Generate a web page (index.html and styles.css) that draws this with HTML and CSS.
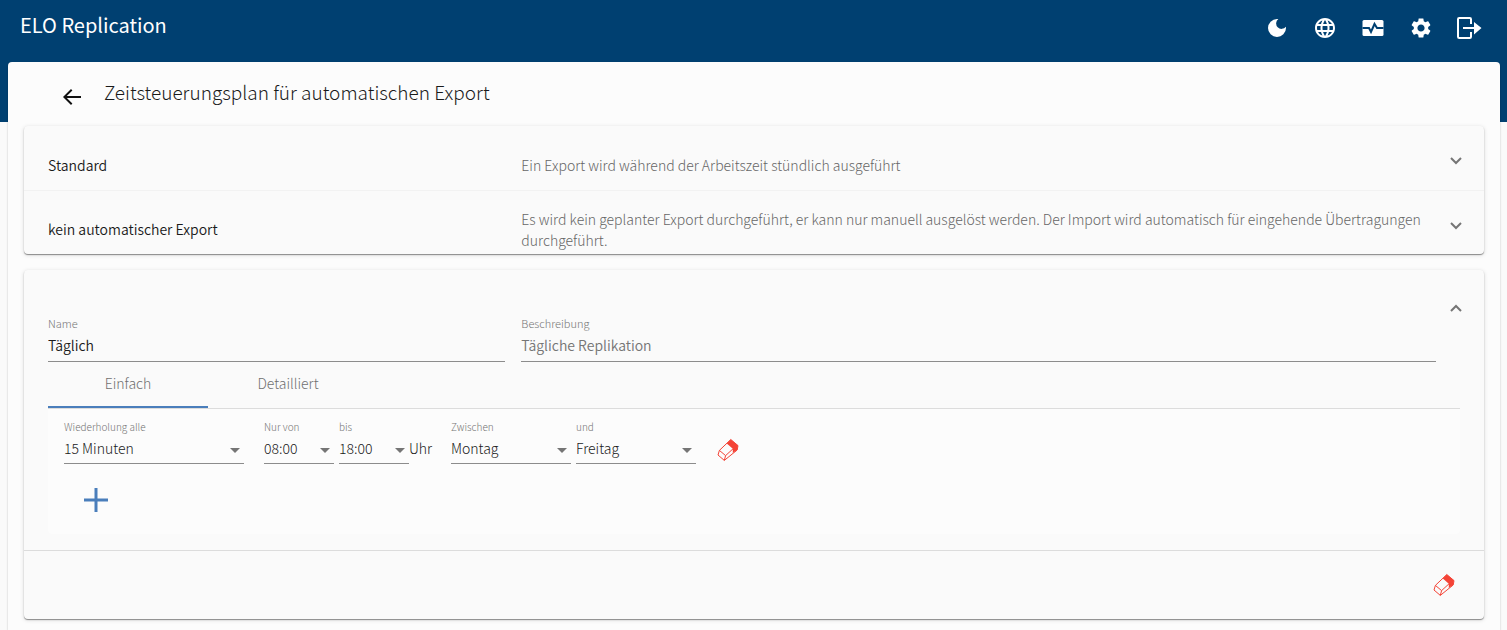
FILE: index.html
```html
<!DOCTYPE html>
<html lang="de">
<head>
<meta charset="utf-8">
<meta name="viewport" content="width=device-width, initial-scale=1">
<title>ELO Replication</title>
<link rel="stylesheet" href="styles.css">
</head>
<body>
<svg class="sprite" aria-hidden="true">
  <symbol id="eraser" viewBox="0 0 24 24">
    <path d="M14.800 1.500 22 7.600 21 12 16.800 15 16.800 10.800 10.800 5.400Z" fill="#f44336"/>
    <path d="M14.800 1.500 22 7.600 21.200 12 8.300 22.400 2 17 3.400 12.400Z M3.400 12.400 9.600 17.600 8.300 22.400 M9.600 17.600 17 10.800" fill="none" stroke="#f44336" stroke-width="1"/>
  </symbol>
</svg>
<header class="topbar">
  <h1 class="brand">ELO Replication</h1>
  <nav class="tools" aria-label="Werkzeuge">
    <button class="icon-button" type="button" aria-label="Dunkles Design"><svg viewBox="0 0 24 24"><path d="M12 3a9 9 0 1 0 9 9c0-.46-.04-.92-.1-1.36A5.4 5.4 0 1 1 13.36 3.1C12.92 3.04 12.46 3 12 3z"/></svg></button>
    <button class="icon-button" type="button" aria-label="Sprache"><svg viewBox="0 0 24 24"><path d="M11.99 2C6.47 2 2 6.48 2 12s4.47 10 9.99 10C17.52 22 22 17.52 22 12S17.52 2 11.99 2zm6.93 6h-2.95c-.32-1.25-.78-2.45-1.38-3.56 1.84.63 3.37 1.91 4.33 3.56zM12 4.04c.83 1.2 1.48 2.53 1.91 3.96h-3.82c.43-1.43 1.08-2.76 1.91-3.96zM4.26 14C4.1 13.36 4 12.69 4 12s.1-1.36.26-2h3.38c-.08.66-.14 1.32-.14 2s.06 1.34.14 2H4.26zm.82 2h2.95c.32 1.25.78 2.45 1.38 3.56-1.84-.63-3.37-1.9-4.33-3.56zm2.95-8H5.08c.96-1.66 2.49-2.93 4.33-3.56C8.81 5.55 8.35 6.75 8.03 8zM12 19.96c-.83-1.2-1.48-2.53-1.91-3.96h3.82c-.43 1.43-1.08 2.76-1.91 3.96zM14.34 14H9.66c-.09-.66-.16-1.32-.16-2s.07-1.35.16-2h4.68c.09.65.16 1.32.16 2s-.07 1.34-.16 2zm.25 5.56c.6-1.11 1.06-2.31 1.38-3.56h2.95c-.96 1.65-2.49 2.93-4.33 3.56zM16.36 14c.08-.66.14-1.32.14-2s-.06-1.34-.14-2h3.38c.16.64.26 1.31.26 2s-.1 1.36-.26 2h-3.38z"/></svg></button>
    <button class="icon-button" type="button" aria-label="Überwachung"><svg viewBox="0 0 24 24"><rect x="1.500" y="4" width="21" height="16" rx="1.500"/><path class="pulse" d="M1.500 12H8l2 4 3.500-8 2.500 4h6.500"/></svg></button>
    <button class="icon-button" type="button" aria-label="Einstellungen"><svg viewBox="0 0 24 24"><path d="M19.14 12.94c.04-.3.06-.61.06-.94 0-.32-.02-.64-.07-.94l2.03-1.58c.18-.14.23-.41.12-.61l-1.92-3.32c-.12-.22-.37-.29-.59-.22l-2.39.96c-.5-.38-1.03-.7-1.62-.94l-.36-2.54c-.04-.24-.24-.41-.48-.41h-3.84c-.24 0-.43.17-.47.41l-.36 2.54c-.59.24-1.13.57-1.62.94l-2.39-.96c-.22-.08-.47 0-.59.22L2.74 8.87c-.12.21-.08.47.12.61l2.03 1.58c-.05.3-.09.63-.09.94s.02.64.07.94l-2.03 1.58c-.18.14-.23.41-.12.61l1.92 3.32c.12.22.37.29.59.22l2.39-.96c.5.38 1.03.7 1.62.94l.36 2.54c.05.24.24.41.48.41h3.84c.24 0 .44-.17.47-.41l.36-2.54c.59-.24 1.13-.56 1.62-.94l2.39.96c.22.08.47 0 .59-.22l1.92-3.32c.12-.22.07-.47-.12-.61l-2.01-1.58zM12 15.6c-1.98 0-3.6-1.62-3.6-3.6s1.62-3.6 3.6-3.6 3.6 1.62 3.6 3.6-1.62 3.6-3.6 3.6z"/></svg></button>
    <button class="icon-button" type="button" aria-label="Abmelden"><svg viewBox="0 0 24 24"><path d="M14 8V3.200Q14 2 12.800 2H2.200Q1 2 1 3.200V20.800Q1 22 2.200 22H12.800Q14 22 14 20.800V16" fill="none" stroke="#fff" stroke-width="2"/><path d="M6 11h11V6l7.500 6-7.500 6.500V13H6z"/></svg></button>
  </nav>
</header>
<main class="sheet">
  <div class="sheet-head">
    <button class="back" type="button" aria-label="Zurück"><svg viewBox="0 0 24 24"><path d="M21 11H6.800l5.600-5.600L11 4 3 12l8 8 1.400-1.400L6.800 13H21z"/></svg></button>
    <h2 class="heading">Zeitsteuerungsplan für automatischen Export</h2>
  </div>

  <section class="panel">
    <button class="row" type="button" aria-expanded="false">
      <span class="columns">
        <span class="plan-name">Standard</span>
        <span class="plan-text">Ein Export wird während der Arbeitszeit stündlich ausgeführt</span>
      </span>
      <svg class="chevron" viewBox="0 0 12 8"><path d="M1 1l5 5 5-5"/></svg>
    </button>
    <button class="row" type="button" aria-expanded="false">
      <span class="columns">
        <span class="plan-name">kein automatischer Export</span>
        <span class="plan-text">Es wird kein geplanter Export durchgeführt, er kann nur manuell ausgelöst werden. Der Import wird automatisch für eingehende Übertragungen durchgeführt.</span>
      </span>
      <svg class="chevron" viewBox="0 0 12 8"><path d="M1 1l5 5 5-5"/></svg>
    </button>
  </section>

  <section class="panel open">
    <div class="edit-head">
      <div class="columns">
        <div class="field wide"><label for="name">Name</label><input id="name" type="text" value="Täglich"></div>
        <div class="field wide muted"><label for="text">Beschreibung</label><input id="text" type="text" value="Tägliche Replikation"></div>
      </div>
      <button class="collapse" type="button" aria-label="Zuklappen" aria-expanded="true"><svg class="chevron" viewBox="0 0 12 8"><path d="M1 7l5-5 5 5"/></svg></button>
    </div>
    <div class="tabs" role="tablist">
      <button class="tab active" type="button" role="tab" aria-selected="true">Einfach</button>
      <button class="tab" type="button" role="tab" aria-selected="false">Detailliert</button>
    </div>
    <div class="schedule">
      <div class="rule">
        <div class="field interval"><label for="interval">Wiederholung alle</label><select id="interval"><option>15 Minuten</option></select></div>
        <div class="group hours">
          <div class="field time"><label for="from">Nur von</label><select id="from"><option>08:00</option></select></div>
          <div class="field time"><label for="to">bis</label><select id="to"><option>18:00</option></select></div>
        </div>
        <span class="unit">Uhr</span>
        <div class="group">
          <div class="field day"><label for="first">Zwischen</label><select id="first"><option>Montag</option></select></div>
          <div class="field day"><label for="last">und</label><select id="last"><option>Freitag</option></select></div>
        </div>
        <button class="erase" type="button" aria-label="Regel löschen"><svg><use href="#eraser"/></svg></button>
      </div>
      <button class="add" type="button" aria-label="Regel hinzufügen"><svg viewBox="0 0 24 24"><path d="M12 0v24M0 12h24"/></svg></button>
    </div>
    <footer class="panel-foot">
      <button class="erase" type="button" aria-label="Plan löschen"><svg><use href="#eraser"/></svg></button>
    </footer>
  </section>
</main>
</body>
</html>
```

FILE: styles.css
```css
* { box-sizing: border-box; }

body {
  margin: 0;
  min-height: 100vh;
  display: flex;
  flex-direction: column;
  background: linear-gradient(#004071 122px, #fafafa 122px);
  color: #1a1a1a;
  font-family: "Noto Sans CJK SC", "Open Sans", sans-serif;
  font-size: 14px;
  font-weight: 300;
  line-height: 21px;
}

button, input, select { font: inherit; color: inherit; }
button { border: 0; padding: 0; background: none; cursor: pointer; }
.sprite { display: none; }

.topbar {
  display: flex;
  justify-content: space-between;
  align-items: center;
  height: 62px;
  padding: 0 26px 6px 20px;
  color: #fff;
}
.brand { margin: 0; padding-bottom: 6px; font-size: 20px; font-weight: 400; line-height: 28px; }
.tools { display: flex; gap: 24px; }
.icon-button { width: 24px; height: 24px; }
.icon-button svg { display: block; width: 24px; height: 24px; fill: #fff; overflow: visible; }
.icon-button .pulse { fill: none; stroke: #004071; stroke-width: 2; }

.sheet {
  flex: 1;
  margin: 0 7px 0 8px;
  padding: 0 16px 8px;
  border-radius: 4px 4px 0 0;
  background: #fcfcfc;
  box-shadow: 0 1px 2px rgba(0, 0, 0, .25);
}
.sheet-head { display: flex; align-items: center; gap: 20px; height: 64px; padding: 0 36px; }
.back { width: 24px; height: 24px; margin-top: 6px; }
.back svg { display: block; width: 24px; height: 24px; fill: #111; }
.heading { margin: 0; padding-bottom: 4px; font-size: 19px; font-weight: 300; line-height: 28px; }

.panel {
  border-radius: 4px;
  background: #fafafa;
  box-shadow: 0 1px 1px rgba(0, 0, 0, .4), 0 1px 4px rgba(0, 0, 0, .15);
}
.panel + .panel { margin-top: 16px; }
.row {
  display: flex;
  align-items: center;
  width: 100%;
  height: 64px;
  padding: 0 22px 0 24px;
  text-align: left;
}
.row + .row { border-top: 1px solid #f2f2f2; }
.columns { flex: 1; display: grid; grid-template-columns: 1fr 2fr; gap: 16px; align-items: center; }
.row .columns { padding-top: 14px; margin-right: 14px; }
.plan-name { font-weight: 350; }
.plan-text { color: #666; }
.muted { color: #757575; }
.chevron { display: block; width: 12px; height: 8px; fill: none; stroke: #757575; stroke-width: 2; }
.row .chevron { margin-top: 6px; }

.edit-head { display: flex; padding: 34px 22px 0 24px; }
.edit-head .columns { margin-right: 14px; padding-top: 8px; }
.collapse { align-self: flex-start; }

.field { position: relative; display: flex; flex-direction: column; border-bottom: 1px solid #8c8c8c; }
.field label { font-size: 11px; line-height: 20px; color: #757575; }
.field input, .field select {
  width: 100%;
  height: 22px;
  padding: 0;
  border: 0;
  border-radius: 0;
  outline: 0;
  background: none;
  appearance: none;
}
.wide { height: 50px; }
.wide label { line-height: 22px; }
.wide input { font-weight: 350; }
.rule .field { height: 47px; }
.rule label { font-size: 10px; }
.rule .field::after {
  content: "";
  position: absolute;
  right: 4px;
  top: 31px;
  border: 5px solid transparent;
  border-top-color: #757575;
  border-bottom: 0;
  pointer-events: none;
}

.tabs { display: flex; height: 47px; margin: 0 24px; border-bottom: 1px solid #dcdcdc; }
.tab { width: 160px; padding-bottom: 2px; border-bottom: 2px solid transparent; color: #707070; }
.active { border-color: #4a7ebb; }

.schedule {
  margin: 0 24px 16px;
  padding: 8px 16px 22px;
  border-radius: 0 0 4px 4px;
  background: #fcfcfc;
}
.rule { display: flex; align-items: center; }
.group { display: flex; gap: 5px; }
.hours { margin-left: 20px; }
.interval { width: 180px; }
.time { width: 70px; }
.day { width: 120px; }
.unit { width: 42px; padding-top: 15px; }
.erase { width: 24px; height: 24px; }
.erase svg { display: block; width: 24px; height: 24px; }
.rule .erase { margin: 19px 0 0 20px; }
.add { display: block; width: 24px; height: 24px; margin: 24px 0 0 20px; }
.add svg { display: block; width: 24px; height: 24px; stroke: #4a7ebb; stroke-width: 3; }

.panel-foot {
  display: flex;
  justify-content: flex-end;
  align-items: center;
  height: 69px;
  padding: 0 28px;
  border-top: 1px solid #dcdcdc;
}
```
